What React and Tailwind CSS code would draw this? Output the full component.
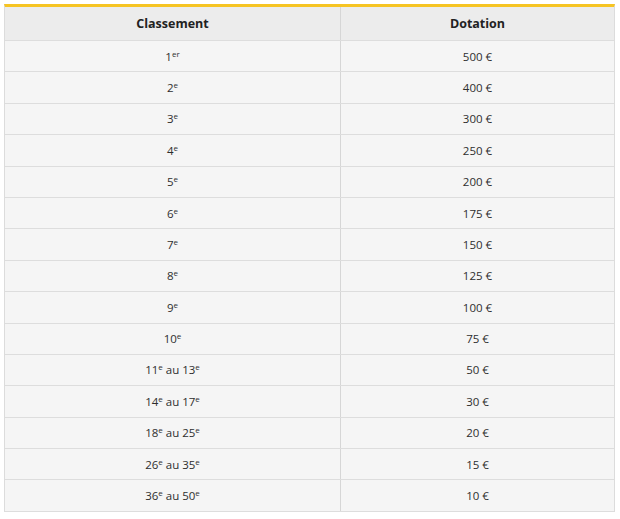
import React from "react";

const rows = [
  [["1", "er"]], [["2", "e"]], [["3", "e"]], [["4", "e"]], [["5", "e"]],
  [["6", "e"]], [["7", "e"]], [["8", "e"]], [["9", "e"]], [["10", "e"]],
  [["11", "e"], ["13", "e"]], [["14", "e"], ["17", "e"]], [["18", "e"], ["25", "e"]],
  [["26", "e"], ["35", "e"]], [["36", "e"], ["50", "e"]],
];
const prizes = ["500 €", "400 €", "300 €", "250 €", "200 €", "175 €", "150 €", "125 €", "100 €", "75 €", "50 €", "30 €", "20 €", "15 €", "10 €"];

function Rank({ parts }) {
  return (
    <span>
      {parts.map((p, i) => (
        <React.Fragment key={i}>
          {i > 0 && " au "}
          {p[0]}
          <sup className="text-[8px] top-[-0.5em] relative align-baseline">{p[1]}</sup>
        </React.Fragment>
      ))}
    </span>
  );
}

export default function App() {
  return (
    <div className="bg-white w-[620px] h-[519px] pt-[4px] pl-[4px]" style={{ fontFamily: '"Open Sans", "Liberation Sans", sans-serif' }}>
      <div className="w-[611px] border-t-[3px] border-t-[#f6c423] border-x border-x-[#dcdcdc] text-[#2e2e2e] text-[11.5px]">
        <div className="grid grid-cols-[336px_1fr] h-[34px] bg-[#ececec] border-b border-[#dddddd] font-bold text-[12.5px] text-[#222]">
          <div className="flex items-center justify-center border-r border-[#d6d6d6] pt-[1px]">Classement</div>
          <div className="flex items-center justify-center pt-[1px]">Dotation</div>
        </div>
        {rows.map((r, i) => (
          <div key={i} className="grid grid-cols-[336px_1fr] h-[31.4px] bg-[#f5f5f5] border-b border-[#dddddd]">
            <div className="flex items-center justify-center border-r border-[#d6d6d6]"><Rank parts={r} /></div>
            <div className="flex items-center justify-center">{prizes[i]}</div>
          </div>
        ))}
      </div>
    </div>
  );
}
